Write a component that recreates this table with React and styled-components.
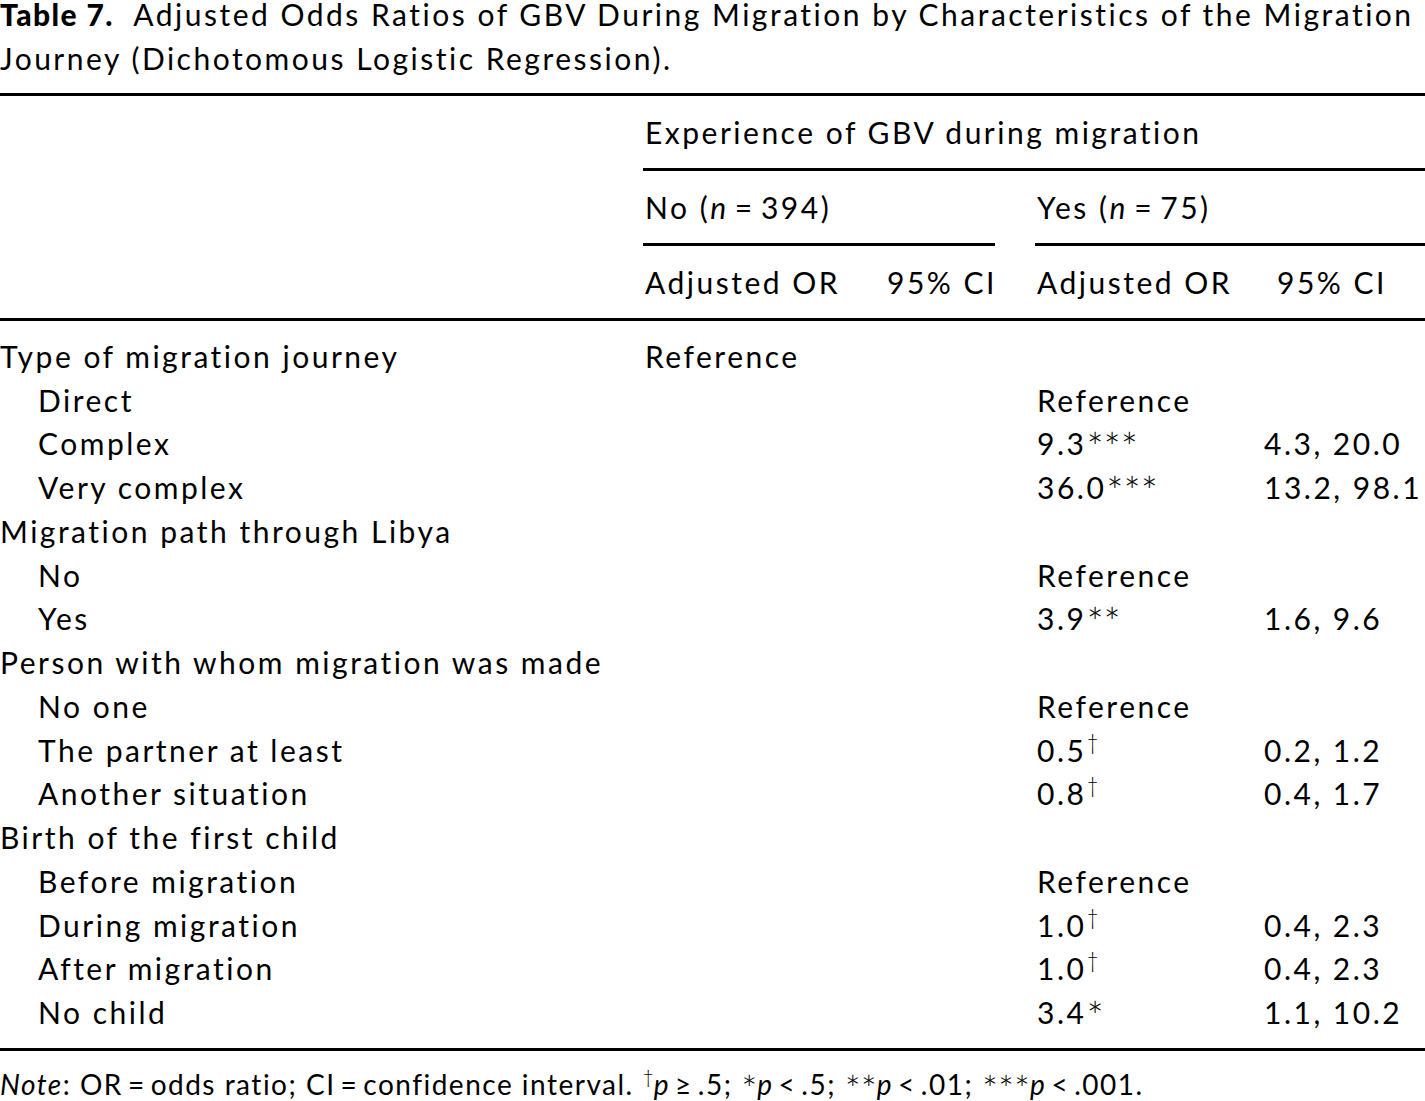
import styled, { createGlobalStyle } from "styled-components";

const GlobalStyle = createGlobalStyle`
  html, body {
    margin: 0;
    padding: 0;
    background: #fff;
  }
  body {
    font-family: "Lato", "Open Sans", sans-serif;
    font-variant-ligatures: none;
    color: #000;
    overflow: hidden;
  }
`;

const rows = [
  { label: "Type of migration journey", group: true, no: "Reference" },
  { label: "Direct", or: "Reference" },
  { label: "Complex", or: "9.3", mark: "***", ci: "4.3, 20.0" },
  { label: "Very complex", or: "36.0", mark: "***", ci: "13.2, 98.1" },
  { label: "Migration path through Libya", group: true },
  { label: "No", or: "Reference" },
  { label: "Yes", or: "3.9", mark: "**", ci: "1.6, 9.6" },
  { label: "Person with whom migration was made", group: true },
  { label: "No one", or: "Reference" },
  { label: "The partner at least", or: "0.5", mark: "†", ci: "0.2, 1.2" },
  { label: "Another situation", or: "0.8", mark: "†", ci: "0.4, 1.7" },
  { label: "Birth of the first child", group: true },
  { label: "Before migration", or: "Reference" },
  { label: "During migration", or: "1.0", mark: "†", ci: "0.4, 2.3" },
  { label: "After migration", or: "1.0", mark: "†", ci: "0.4, 2.3" },
  { label: "No child", or: "3.4", mark: "*", ci: "1.1, 10.2" },
];

const App = () => {
  return (
    <Page>
      <GlobalStyle />
      <Caption>
        <Bold>Table 7.</Bold>&nbsp; Adjusted Odds Ratios of GBV During Migration by Characteristics of the Migration
        Journey (Dichotomous Logistic Regression).
      </Caption>

      <Head>
        <HeadRow>
          <Spacer />
          <HeadCell $span="2 / 7" $rule>Experience of GBV during migration</HeadCell>
        </HeadRow>
        <HeadRow>
          <Spacer />
          <HeadCell $span="2 / 4" $rule>
            No (<i>n</i>&thinsp;=&thinsp;394)
          </HeadCell>
          <HeadCell $span="5 / 7" $rule>
            Yes (<i>n</i>&thinsp;=&thinsp;75)
          </HeadCell>
        </HeadRow>
        <HeadRow>
          <Spacer />
          <HeadCell $span="2 / 3">Adjusted OR</HeadCell>
          <HeadCell $span="3 / 4">95% CI</HeadCell>
          <HeadCell $span="5 / 6">Adjusted OR</HeadCell>
          <HeadCell $span="6 / 7" $shift>95% CI</HeadCell>
        </HeadRow>
      </Head>

      <Body>
        {rows.map((r, i) => (
          <BodyRow key={i}>
            <Label $indent={!r.group}>{r.label}</Label>
            <Value $col={2}>{r.no}</Value>
            <Value $col={5}>
              {r.or}
              {r.mark && <Mark $dagger={r.mark === "†"}>{r.mark}</Mark>}
            </Value>
            <Value $col={6}>{r.ci}</Value>
          </BodyRow>
        ))}
      </Body>

      <Note>
        <i>Note</i>: OR&thinsp;=&thinsp;odds ratio; CI&thinsp;=&thinsp;confidence interval.{" "}
        <Mark $dagger>†</Mark>
        <i>p</i>&thinsp;≥&thinsp;.5; <Mark>*</Mark>
        <i>p</i>&thinsp;&lt;&thinsp;.5; <Mark>**</Mark>
        <i>p</i>&thinsp;&lt;&thinsp;.01; <Mark>***</Mark>
        <i>p</i>&thinsp;&lt;&thinsp;.001.
      </Note>
    </Page>
  );
};
export default App;

const columns = "643px 242px 110px 40px 227px 163px";

const Page = styled.div`
  width: 1425px;
  height: 1101px;
  overflow: hidden;
  font-size: 30px;
  letter-spacing: 2.5px;
`;

const Caption = styled.p`
  margin: -8px 0 0;
  height: 101px;
  line-height: 44px;
  font-size: 30px;
  letter-spacing: 2.5px;
`;

const Bold = styled.b`
  font-weight: 900;
  letter-spacing: 1.4px;
`;

const Head = styled.div`
  border-top: 3px solid #000;
  border-bottom: 3px solid #000;
`;

const HeadRow = styled.div`
  display: grid;
  grid-template-columns: ${columns};
`;

const Spacer = styled.div`
  grid-column: 1 / 2;
`;

const HeadCell = styled.div`
  grid-column: ${(p) => p.$span};
  display: flex;
  align-items: center;
  height: 72px;
  padding-left: ${(p) => (p.$shift ? "15px" : "2px")};
  white-space: nowrap;
  border-bottom: ${(p) => (p.$rule ? "3px solid #000" : "none")};
`;

const Body = styled.div`
  padding: 13px 0 14px;
  border-bottom: 3px solid #000;
`;

const BodyRow = styled.div`
  display: grid;
  grid-template-columns: ${columns};
  height: 43.75px;
  align-items: center;
  white-space: nowrap;
`;

const Label = styled.div`
  grid-column: 1 / 2;
  padding-left: ${(p) => (p.$indent ? "38px" : "0")};
`;

const Value = styled.div`
  grid-column: ${(p) => p.$col} / ${(p) => p.$col + 1};
  grid-row: 1;
  padding-left: 2px;
`;

const Mark = styled.span`
  font-size: ${(p) => (p.$dagger ? "0.7em" : "1.35em")};
  vertical-align: ${(p) => (p.$dagger ? "0.55em" : "-0.2em")};
  letter-spacing: 0;
  line-height: 0;
  font-weight: 300;
`;

const Note = styled.p`
  margin: 13px 0 0;
  font-size: 28px;
  letter-spacing: 1.5px;
  line-height: 40px;
  white-space: nowrap;
`;
